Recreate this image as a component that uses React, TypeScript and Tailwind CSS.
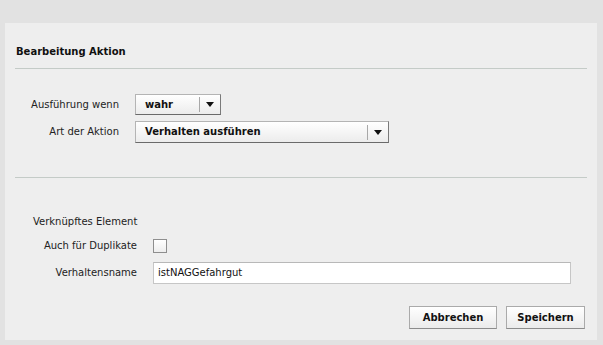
import React from "react";

type SelectProps = {
  value: string;
  width: string;
  height: string;
};

function Arrow() {
  return (
    <svg width="8" height="5" viewBox="0 0 8 5" className="block">
      <polygon points="0,0 8,0 4,5" fill="#111" />
    </svg>
  );
}

function Select({ value, width, height }: SelectProps) {
  return (
    <div
      className={`${width} ${height} flex items-center border border-[#b4b4b4] border-b-[#6a6a6a] border-r-[#7a7a7a] bg-gradient-to-b from-white to-[#ececec]`}
    >
      <span className="flex-1 pl-[9px] font-bold text-[10px] text-[#111]">{value}</span>
      <span className="h-[15px] w-px bg-[#a8a8a8]" />
      <span className="w-[20px] flex justify-center">
        <Arrow />
      </span>
    </div>
  );
}

function Button({ label, width }: { label: string; width: string }) {
  return (
    <button
      className={`${width} h-[23px] border border-[#aaaaaa] border-b-[#8c8c8c] bg-gradient-to-b from-white to-[#ebebeb] font-bold text-[10px] text-[#111]`}
    >
      {label}
    </button>
  );
}

export default function App() {
  return (
    <div className="w-[603px] h-[345px] bg-[#e2e2e2] pt-[23px] pl-[5px] pr-[6px] font-['DejaVu_Sans',sans-serif] text-[10px] leading-[14px] text-[#222]">
      <div className="h-[317px] bg-[#eeeeee] flex flex-col">
        <h1 className="pt-[22px] pl-[11px] font-bold text-[#111]">Bearbeitung Aktion</h1>
        <div className="mt-[9px] mx-[10px] h-px bg-[#c4cbc7]" />

        <div className="mt-[25px] flex items-center">
          <span className="w-[114px] text-right">Ausführung wenn</span>
          <div className="ml-[16px]">
            <Select value="wahr" width="w-[86px]" height="h-[21px]" />
          </div>
        </div>
        <div className="mt-[6px] flex items-center">
          <span className="w-[114px] text-right">Art der Aktion</span>
          <div className="ml-[16px]">
            <Select value="Verhalten ausführen" width="w-[254px]" height="h-[22px]" />
          </div>
        </div>

        <div className="mt-[34px] mx-[10px] h-px bg-[#c4cbc7]" />

        <p className="mt-[37px] pl-[28px]">Verknüpftes Element</p>

        <div className="mt-[10px] flex items-center">
          <span className="w-[132px] text-right">Auch für Duplikate</span>
          <span className="ml-[16px] w-[14px] h-[14px] border border-[#8e8e8e] bg-gradient-to-b from-white to-[#ededed]" />
        </div>
        <div className="mt-[9px] flex items-center">
          <span className="w-[132px] text-right">Verhaltensname</span>
          <div className="ml-[16px] w-[418px] h-[22px] border border-[#c6c6c6] border-t-[#b8b8b8] bg-white flex items-center pl-[4px] text-[#111]">
            istNAGGefahrgut
          </div>
        </div>

        <div className="mt-[22px] flex justify-end gap-[9px] pr-[12px]">
          <Button label="Abbrechen" width="w-[88px]" />
          <Button label="Speichern" width="w-[79px]" />
        </div>
      </div>
    </div>
  );
}
